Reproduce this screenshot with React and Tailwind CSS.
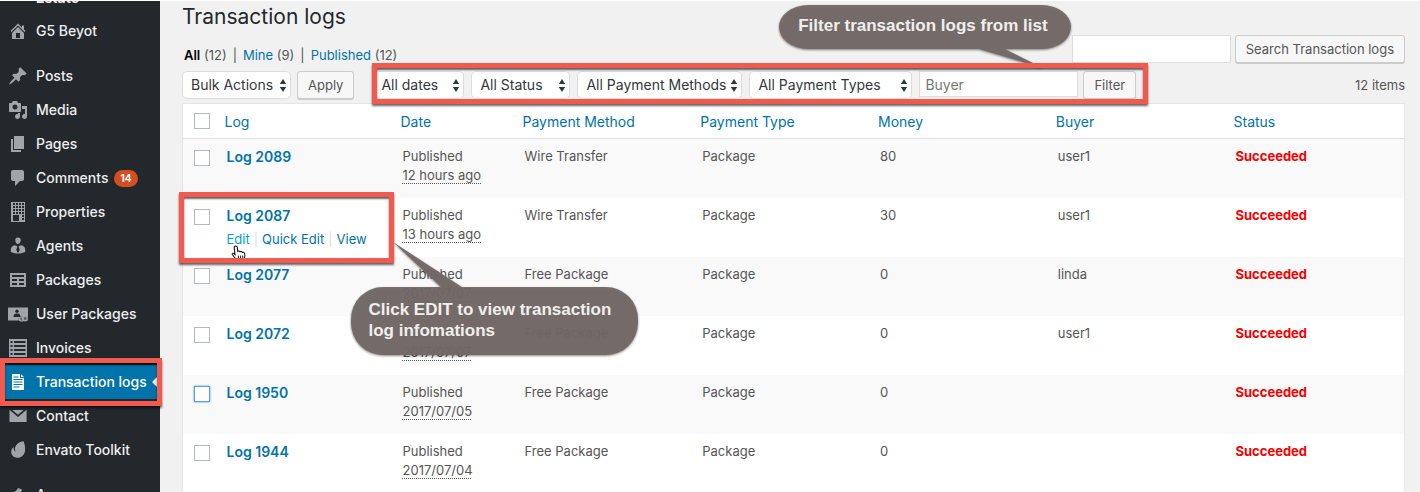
import { useState } from "react";
import clsx from "clsx";

/* ===== ICONS (20x20 grid) ===== */
const ICONS = {
  home: "M16 8.5l1.53 1.53-1.06 1.06L10 4.6l-6.47 6.49-1.06-1.06L10 2.5l4 4v-2h2v4zm-6-2.46l6 5.99V18H4v-5.97zM12 17v-5H8v5h4z",
  pin: "M10.44 3.02l1.82-1.82 6.36 6.35-1.83 1.82c-1.05-.68-2.48-.57-3.41.36l-.75.75c-.92.93-1.04 2.35-.35 3.41l-1.83 1.82-2.41-2.41-2.8 2.79c-.42.42-3.38 2.71-3.8 2.29s1.86-3.39 2.28-3.81l2.79-2.79L4.1 9.36l1.83-1.82c1.05.69 2.48.57 3.4-.36l.75-.75c.93-.92 1.05-2.35.36-3.41z",
  media:
    "M13 11V4c0-.55-.45-1-1-1h-1.67L9 1H5L3.67 3H2c-.55 0-1 .45-1 1v7c0 .55.45 1 1 1h10c.55 0 1-.45 1-1zM7 4.5c1.38 0 2.5 1.12 2.5 2.5S8.38 9.5 7 9.5 4.5 8.38 4.5 7 5.62 4.5 7 4.5zM14 6h5v10.5c0 1.38-1.12 2.5-2.5 2.5S14 17.88 14 16.5s1.12-2.5 2.5-2.5c.17 0 .34.02.5.05V9h-3V6zm-4 8.05V13h2v3.5c0 1.38-1.12 2.5-2.5 2.5S7 17.88 7 16.5 8.12 14 9.5 14c.17 0 .34.02.5.05z",
  pages: "M6 15V2h10v13H6zm-1 1h8v2H3V5h2v11z",
  comment:
    "M5 2h9c1.1 0 2 .9 2 2v7c0 1.1-.9 2-2 2h-2l-5 5v-5H5c-1.1 0-2-.9-2-2V4c0-1.1.9-2 2-2z",
  building:
    "M3 0h14v20H3zM5 1v2h2V1zm3 0v2h2V1zm3 0v2h2V1zm3 0v2h2V1zM5 4v2h2V4zm3 0v2h2V4zm3 0v2h2V4zm3 0v2h2V4zM5 7v2h2V7zm3 0v2h2V7zm3 0v2h2V7zm3 0v2h2V7zM5 10v2h2v-2zm3 0v2h2v-2zm3 0v2h2v-2zm3 0v2h2v-2zM5 13v6h6v-6zm9 0v2h2v-2zm0 3v2h2v-2z",
  agent:
    "M10 1.500c1.900 0 2.900 1.300 2.700 3.100C12.500 6.500 11.400 8 10 8S7.500 6.500 7.300 4.600C7.100 2.800 8.100 1.500 10 1.500zM7 9.200l2.400 1L8.300 14l1.200 2.500h1l1.200-2.500-1.100-3.800 2.400-1c2.600.6 4.200 2 4.200 4.300V16c-1.700.9-4.200 1.500-7.200 1.500S4.500 16.900 2.800 16v-2.500C2.800 11.200 4.400 9.800 7 9.200z",
  table:
    "M18 17V3H2v14h16zM16 7H4V5h12v2zm-7 4H4V9h5v2zm7 0h-5V9h5v2zm-7 4H4v-2h5v2zm7 0h-5v-2h5v2z",
  list: "M1 1h18v18H1zM2.500 3v2h2V3zM6 3v2h11.500V3zM2.500 7v2h2V7zM6 7v2h11.500V7zm-3.500 4v2h2v-2zM6 11v2h11.500v-2zm-3.500 4v2h2v-2zM6 15v2h11.500v-2z",
  document:
    "M4 2h8v4h4v12H4zM13 2l3 3h-3zM5.500 4.500v.9h5v-.9zm0 2.500v.9h9V7zm0 2.500v.9h9v-.9zm0 2.500v.9h9V12zm0 2.500v.9h6v-.9z",
  mail: "M2 4.300L10 11l8-6.700V4h.6v12H1.500V4H2zM4.300 4h11.400L10 8.700z",
  leaf: "M15.500 1.200C12 1.500 8.500 3.500 7.300 7c-.5 1.700-.4 3.500.2 5-1.300-1-2-2.800-1.900-5C4 8.300 3 10.200 3.200 12.200c.3 3.300 3 5.500 6.300 5.500 4 0 7-2.700 7.500-7 .3-3.500-.2-7-1.500-9.500z",
  brush: "M6 7c2-1 3-2 4-4l4 1.500L13 7l5 4-4 5 1 3H4l2-5-4-2 1-3z",
};

function Icon({ name }) {
  if (name === "userCard") {
    return (
      <svg viewBox="0 0 20 20" className="size-5" fill="currentColor">
        <path d="M0 3.500h20v13H0z" />
        <g fill="#23282d">
          <circle cx="9" cy="7.200" r="1.700" />
          <path d="M5.500 13c0-2.500 1.200-3.600 3.500-3.600s3.500 1.100 3.500 3.600z" />
          <path d="M10.500 14.500l2-2h7.500v4h-9z" opacity=".5" />
        </g>
        <g fill="none" stroke="currentColor" strokeWidth="1.200">
          <circle cx="13.500" cy="15" r="2" />
          <circle cx="17" cy="14.500" r="2.300" />
        </g>
      </svg>
    );
  }
  return (
    <svg viewBox="0 0 20 20" className="size-5" fill="currentColor">
      <path fillRule="evenodd" d={ICONS[name]} />
    </svg>
  );
}

const MENU = [
  [{ label: "G5 Beyot", icon: "home" }],
  [
    { label: "Posts", icon: "pin" },
    { label: "Media", icon: "media" },
    { label: "Pages", icon: "pages" },
    { label: "Comments", icon: "comment", count: 14 },
    { label: "Properties", icon: "building" },
    { label: "Agents", icon: "agent" },
    { label: "Packages", icon: "table" },
    { label: "User Packages", icon: "userCard" },
    { label: "Invoices", icon: "list" },
    { label: "Transaction logs", icon: "document", active: true },
    { label: "Contact", icon: "mail" },
    { label: "Envato Toolkit", icon: "leaf" },
  ],
  [{ label: "Appearance", icon: "brush" }],
];

const LOGS = [
  { id: 2089, date: "12 hours ago", method: "Wire Transfer", money: 80, buyer: "user1" },
  { id: 2087, date: "13 hours ago", method: "Wire Transfer", money: 30, buyer: "user1", hovered: true },
  { id: 2077, date: "2017/07/07", method: "Free Package", money: 0, buyer: "linda" },
  { id: 2072, date: "2017/07/07", method: "Free Package", money: 0, buyer: "user1" },
  { id: 1950, date: "2017/07/05", method: "Free Package", money: 0, buyer: "", focused: true },
  { id: 1944, date: "2017/07/04", method: "Free Package", money: 0, buyer: "" },
];

const COLUMNS = [
  { name: "Log", width: "w-[176px]" },
  { name: "Date", width: "w-[122px]" },
  { name: "Payment Method" },
  { name: "Payment Type" },
  { name: "Money" },
  { name: "Buyer" },
  { name: "Status", width: "w-[181px]" },
];

/* ===== ANNOTATIONS ===== */
function Highlight({ className }) {
  return (
    <span
      className={clsx(
        "pointer-events-none absolute z-20 border-5 border-[#f15b4f] shadow-[0_2px_2px_rgba(0,0,0,0.6),inset_0_2px_2px_rgba(0,0,0,0.6)]",
        className
      )}
    />
  );
}

function Callout({ className, textClass, width, height, path, children }) {
  return (
    <div className={clsx("pointer-events-none absolute z-10", className)}>
      <svg
        width={width}
        height={height}
        className="absolute top-0 left-0 overflow-visible drop-shadow-[0_1px_1px_rgba(0,0,0,0.5)]"
      >
        <path d={path} fill="#736966" fillOpacity="0.94" />
      </svg>
      <p
        className={clsx(
          "relative font-['Liberation_Sans',sans-serif] text-[17px] leading-[21px] font-bold whitespace-nowrap text-[#f1efee]",
          textClass
        )}
      >
        {children}
      </p>
    </div>
  );
}

/* ===== CONTROLS ===== */
function Select({ label, className }) {
  return (
    <span className={clsx("relative block", className)}>
      <select
        aria-label={label}
        className="h-7 w-full appearance-none rounded-[5px] border border-[#ddd] bg-white pl-2 text-sm text-[#32373c]"
      >
        <option>{label}</option>
      </select>
      <svg
        viewBox="0 0 8 14"
        className="pointer-events-none absolute top-2 right-1 h-3.5 w-2"
        fill="#32373c"
      >
        <path d="M4 0l3.200 5H.8zM4 13L.8 8h6.400z" />
      </svg>
    </span>
  );
}

function Button({ children, className }) {
  return (
    <button
      type="button"
      className={clsx(
        "h-7 rounded-[3px] border border-[#ccc] bg-[#f7f7f7] px-2.5 text-[13px] whitespace-nowrap text-[#555] shadow-[0_1px_0_#ccc]",
        className
      )}
    >
      {children}
    </button>
  );
}

function Checkbox({ label, focused }) {
  return (
    <input
      type="checkbox"
      aria-label={label}
      className={clsx(
        "block size-4 appearance-none border bg-white",
        focused ? "border-[#5b9dd9] shadow-[0_0_2px_rgba(30,140,190,0.8)]" : "border-[#b4b9be]"
      )}
    />
  );
}

function Sidebar() {
  return (
    <nav className="relative z-10 w-40 shrink-0 bg-[#23282d] text-sm font-medium text-[#eee]">
      <a href="#estate" className="-mt-[13px] block h-[26px] pl-9 leading-5 font-bold">
        Estate
      </a>
      {MENU.map((group, i) => (
        <ul key={i} className="mb-[11px]">
          {group.map((item) => (
            <li key={item.label} className="relative">
              <a
                href="#menu"
                className={clsx(
                  "relative flex h-[34px] items-center gap-2 pl-2 whitespace-nowrap",
                  item.active && "bg-[#0073aa] text-white"
                )}
              >
                <span className={item.active ? "text-white" : "text-[#a0a5aa]"}>
                  <Icon name={item.icon} />
                </span>
                {item.label}
                {item.count && (
                  <span className="-ml-0.5 rounded-full bg-[#d54e21] px-[6px] text-[10px] leading-[17px] font-bold text-white">
                    {item.count}
                  </span>
                )}
                {item.active && (
                  <svg viewBox="0 0 8 16" className="absolute right-0 h-4 w-2" fill="#f1f1f1">
                    <path d="M8 0v16L0 8z" />
                  </svg>
                )}
              </a>
              {item.active && <Highlight className="-top-[7px] -right-0.5 -bottom-[7px] left-0" />}
            </li>
          ))}
        </ul>
      ))}
    </nav>
  );
}

function HandCursor() {
  return (
    <svg
      viewBox="0 0 16 16"
      className="pointer-events-none absolute top-full left-1 -mt-1 size-[17px]"
    >
      <path
        d="M4.500 1c.9 0 1.400.6 1.500 1.500L6.300 6c.7-.6 1.900-.4 2.200.4.800-.5 1.900-.2 2.200.6.900-.4 2.100.1 2.200 1.200.3 2.300.1 4.100-1 5.600v1.700H5.500v-1.700C4 12.400 2.300 10.700 1.200 8.900.8 8 2 7.300 2.800 8l1 1L3 2.500C2.900 1.600 3.600 1 4.500 1z"
        fill="#fff"
        stroke="#111"
        strokeWidth="1"
      />
      <path d="M7 10v3M9 10v3M11 10v3" stroke="#111" strokeWidth=".9" />
    </svg>
  );
}

function LogRow({ log, striped }) {
  return (
    <tr className={clsx("h-[59px] align-top text-[13px]", striped && "bg-[#f9f9f9]")}>
      <td className="pt-[11px] pl-[11px]">
        <Checkbox label={`Select Log ${log.id}`} focused={log.focused} />
      </td>
      <td className="relative pt-2 pl-3">
        <a href="#log" className="block text-sm leading-[19px] font-semibold text-[#0073aa]">
          Log {log.id}
        </a>
        {log.hovered && (
          <>
            <div className="relative mt-[5px] flex gap-1 whitespace-nowrap text-[#ddd]">
              <a href="#edit" className="text-[#00a0d2]">Edit</a>|
              <a href="#quick" className="text-[#0073aa]">Quick Edit</a>|
              <a href="#view" className="text-[#0073aa]">View</a>
              <HandCursor />
            </div>
            <Highlight className="-top-1.5 right-[-3px] -bottom-1.5 -left-9" />
            <Callout
              className="top-[44px] left-[136px]"
              textClass="pt-[57px] pl-[18px]"
              width={287}
              height={113}
              path="M32 45H90L42 0L111 45H255A32 32 0 0 1 287 77V81A32 32 0 0 1 255 113H32A32 32 0 0 1 0 81V77A32 32 0 0 1 32 45z"
            >
              Click EDIT to view transaction
              <br />
              log infomations
            </Callout>
          </>
        )}
      </td>
      <td className="pt-2 pl-3 whitespace-nowrap">
        Published
        <br />
        <abbr className="underline decoration-dotted decoration-1 underline-offset-3">
          {log.date}
        </abbr>
      </td>
      <td className="pt-2 pl-3">{log.method}</td>
      <td className="pt-2 pl-3">Package</td>
      <td className="pt-2 pl-3">{log.money}</td>
      <td className="pt-2 pl-3">{log.buyer}</td>
      <td className="pt-2 pl-3 font-bold text-[#f80000]">Succeeded</td>
    </tr>
  );
}

export default function App() {
  const [buyer, setBuyer] = useState("");
  const [search, setSearch] = useState("");

  return (
    <div className="flex h-screen overflow-hidden border-t border-white bg-[#f1f1f1] font-['Inter',sans-serif] text-sm leading-[19px] text-[#555]">
      <Sidebar />
      <main className="min-w-0 flex-1 pr-[15px] pl-[22px]">
        <h1 className="text-[21px] leading-8 text-[#23282d]">Transaction logs</h1>

        {/* VIEWS + SEARCH */}
        <div className="mt-0.5 flex h-7 items-end justify-between">
          <ul className="flex gap-1.5 pl-0.5 text-[13px] leading-4">
            <li>
              <a href="#all" className="font-semibold text-black">All</a> (12)
            </li>
            <li>|</li>
            <li>
              <a href="#mine" className="text-[#0073aa]">Mine</a> (9)
            </li>
            <li>|</li>
            <li>
              <a href="#published" className="text-[#0073aa]">Published</a> (12)
            </li>
          </ul>
          <form className="flex gap-1">
            <input
              type="search"
              aria-label="Search"
              value={search}
              onChange={(e) => setSearch(e.target.value)}
              className="h-7 w-[159px] border border-[#ddd] bg-white px-1.5"
            />
            <Button>Search Transaction logs</Button>
          </form>
        </div>

        {/* FILTERS */}
        <div className="mt-2 flex items-start">
          <Select label="Bulk Actions" className="w-[109px]" />
          <Button className="ml-1.5">Apply</Button>
          <div className="relative ml-[18px] flex items-start gap-[7px]">
            <Select label="All dates" className="w-[92px]" />
            <Select label="All Status" className="w-[99px]" />
            <Select label="All Payment Methods" className="w-[165px]" />
            <Select label="All Payment Types" className="w-[163px]" />
            <input
              type="text"
              aria-label="Buyer"
              placeholder="Buyer"
              value={buyer}
              onChange={(e) => setBuyer(e.target.value)}
              className="h-[26px] w-[159px] border border-[#ddd] bg-white px-[5px] placeholder:text-[#777]"
            />
            <Button className="-ml-0.5">Filter</Button>
            <Highlight className="-top-2 -right-3 -bottom-[5px] left-0" />
            <Callout
              className="right-[65px] -top-[66px] w-[292px]"
              textClass="pt-[10px] pl-[19px]"
              width={292}
              height={62}
              path="M29 0H263A29 22 0 0 1 263 44H226L264 63L200 44H29A29 22 0 0 1 29 0z"
            >
              Filter transaction logs from list
            </Callout>
          </div>
          <span className="ml-auto pt-[5px] text-[13px]">12 items</span>
        </div>

        {/* LOG TABLE */}
        <table className="mt-1 w-full table-fixed border-collapse border border-[#e5e5e5] bg-white">
          <thead>
            <tr className="h-[35px] border-b border-[#e1e1e1] text-left">
              <th className="w-8 pl-[11px]">
                <Checkbox label="Select all" />
              </th>
              {COLUMNS.map((col) => (
                <th key={col.name} className={clsx("pl-2.5 font-normal", col.width)}>
                  <a href="#sort" className="text-[#0073aa]">{col.name}</a>
                </th>
              ))}
            </tr>
          </thead>
          <tbody>
            {LOGS.map((log, i) => (
              <LogRow key={log.id} log={log} striped={i % 2 === 0} />
            ))}
          </tbody>
        </table>
      </main>
    </div>
  );
}
